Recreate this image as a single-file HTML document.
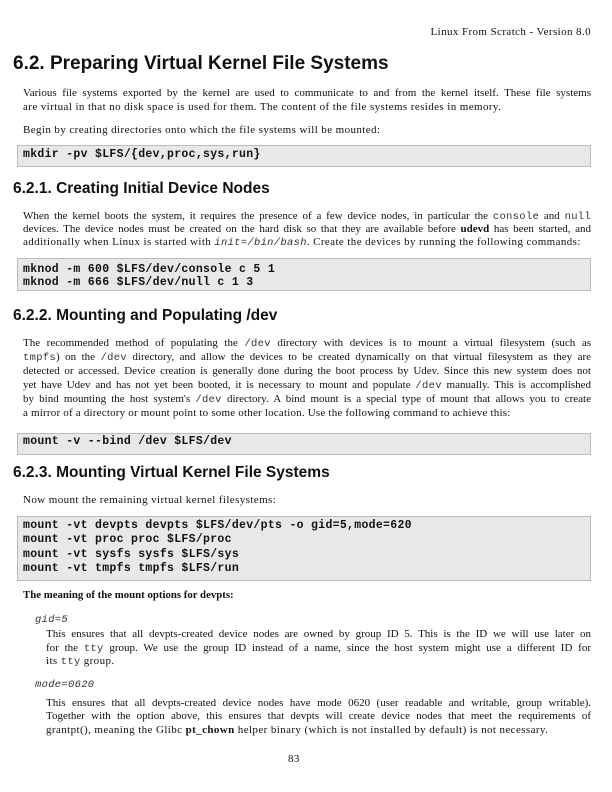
<!DOCTYPE html>
<html><head><meta charset="utf-8"><style>
*{margin:0;padding:0;box-sizing:border-box}
body{width:612px;height:792px;background:#fff;position:relative;font-family:"Liberation Serif",serif;font-size:11px;letter-spacing:0.4px;color:#111;overflow:hidden}
.a{position:absolute;white-space:nowrap;line-height:14px}
.j{position:absolute;left:23px;width:568px;line-height:14px;text-align:justify;text-align-last:justify;white-space:nowrap;letter-spacing:0}
.j2{position:absolute;left:46px;width:545px;line-height:14px;text-align:justify;text-align-last:justify;white-space:nowrap;letter-spacing:0}
h1,h2{position:absolute;left:13px;font-family:"Liberation Sans",sans-serif;font-weight:bold;white-space:nowrap;letter-spacing:0}
h1{font-size:19px}
h2{font-size:15.5px}
.box{position:absolute;left:17px;width:574px;background:#e8e8e8;border:1px solid #bbb}
.c{font-family:"Liberation Mono",monospace;font-weight:bold;font-size:11.5px;letter-spacing:0.3px}
.m{font-family:"Liberation Mono",monospace;font-size:10.5px;color:#333;letter-spacing:0.3px}
.i{font-family:"Liberation Mono",monospace;font-style:italic;font-size:10.5px;color:#333;letter-spacing:0.3px}
</style></head><body>
<div class="a" style="right:21px;top:25px">Linux From Scratch - Version 8.0</div>
<h1 style="top:53px">6.2. Preparing Virtual Kernel File Systems</h1>
<div class="j" style="top:86px">Various file systems exported by the kernel are used to communicate to and from the kernel itself. These file systems</div>
<div class="a" style="left:23px;top:100px">are virtual in that no disk space is used for them. The content of the file systems resides in memory.</div>
<div class="a" style="left:23px;top:123px">Begin by creating directories onto which the file systems will be mounted:</div>
<div class="box" style="top:145px;height:22px"></div>
<div class="a c" style="left:23px;top:148px">mkdir -pv $LFS/{dev,proc,sys,run}</div>
<h2 style="top:180px">6.2.1. Creating Initial Device Nodes</h2>
<div class="j" style="top:209px">When the kernel boots the system, it requires the presence of a few device nodes, in particular the <span class="m">console</span> and <span class="m">null</span></div>
<div class="j" style="top:222px">devices. The device nodes must be created on the hard disk so that they are available before <b>udevd</b> has been started, and</div>
<div class="a" style="left:23px;top:235px;letter-spacing:0.4px">additionally when Linux is started with <span class="i">init=/bin/bash</span>. Create the devices by running the following commands:</div>
<div class="box" style="top:258px;height:33px"></div>
<div class="a c" style="left:23px;top:263px">mknod -m 600 $LFS/dev/console c 5 1</div>
<div class="a c" style="left:23px;top:276px">mknod -m 666 $LFS/dev/null c 1 3</div>
<h2 style="top:307px">6.2.2. Mounting and Populating /dev</h2>
<div class="j" style="top:336px">The recommended method of populating the <span class="m">/dev</span> directory with devices is to mount a virtual filesystem (such as</div>
<div class="j" style="top:350px"><span class="m">tmpfs</span>) on the <span class="m">/dev</span> directory, and allow the devices to be created dynamically on that virtual filesystem as they are</div>
<div class="j" style="top:364px">detected or accessed. Device creation is generally done during the boot process by Udev. Since this new system does not</div>
<div class="j" style="top:378px">yet have Udev and has not yet been booted, it is necessary to mount and populate <span class="m">/dev</span> manually. This is accomplished</div>
<div class="j" style="top:392px">by bind mounting the host system's <span class="m">/dev</span> directory. A bind mount is a special type of mount that allows you to create</div>
<div class="a" style="left:23px;top:406px;letter-spacing:0.2px">a mirror of a directory or mount point to some other location. Use the following command to achieve this:</div>
<div class="box" style="top:433px;height:22px"></div>
<div class="a c" style="left:23px;top:435px">mount -v --bind /dev $LFS/dev</div>
<h2 style="top:464px">6.2.3. Mounting Virtual Kernel File Systems</h2>
<div class="a" style="left:23px;top:493px">Now mount the remaining virtual kernel filesystems:</div>
<div class="box" style="top:516px;height:65px"></div>
<div class="a c" style="left:23px;top:519px">mount -vt devpts devpts $LFS/dev/pts -o gid=5,mode=620</div>
<div class="a c" style="left:23px;top:533px">mount -vt proc proc $LFS/proc</div>
<div class="a c" style="left:23px;top:548px">mount -vt sysfs sysfs $LFS/sys</div>
<div class="a c" style="left:23px;top:562px">mount -vt tmpfs tmpfs $LFS/run</div>
<div class="a" style="left:23px;top:588px;font-weight:bold;font-size:10.8px;letter-spacing:0">The meaning of the mount options for devpts:</div>
<div class="a i" style="left:35px;top:613px">gid=5</div>
<div class="j2" style="top:627px">This ensures that all devpts-created device nodes are owned by group ID 5. This is the ID we will use later on</div>
<div class="j2" style="top:641px">for the <span class="m">tty</span> group. We use the group ID instead of a name, since the host system might use a different ID for</div>
<div class="a" style="left:46px;top:654px">its <span class="m">tty</span> group.</div>
<div class="a i" style="left:35px;top:678px">mode=0620</div>
<div class="j2" style="top:696px">This ensures that all devpts-created device nodes have mode 0620 (user readable and writable, group writable).</div>
<div class="j2" style="top:709px">Together with the option above, this ensures that devpts will create device nodes that meet the requirements of</div>
<div class="a" style="left:46px;top:723px">grantpt(), meaning the Glibc <b>pt_chown</b> helper binary (which is not installed by default) is not necessary.</div>
<div class="a" style="left:288px;top:752px">83</div>
</body></html>
